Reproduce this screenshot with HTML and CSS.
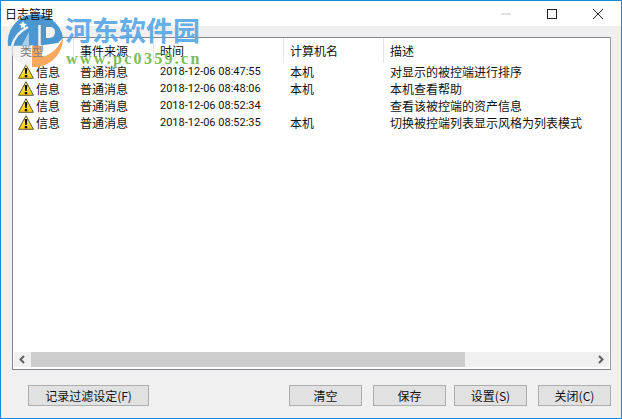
FILE: index.html
```html
<!DOCTYPE html>
<html lang="zh-CN">

<head>
   <meta charset="UTF-8">
   <title>日志管理</title>
   <link rel="stylesheet" href="styles.css">
</head>

<body>
   <div class="window">
      <!-- 标题栏 -->
      <div class="titlebar">
         <span class="title">日志管理</span>
         <div class="controls">
            <svg class="ctl" width="46" height="26" viewBox="0 0 46 26"><path d="M18 13h10" stroke="#c4c4c4" fill="none"/></svg>
            <svg class="ctl" width="46" height="26" viewBox="0 0 46 26"><rect x="18.500" y="8.500" width="9" height="9" stroke="#222" fill="none"/></svg>
            <svg class="ctl" width="46" height="26" viewBox="0 0 46 26"><path d="M18 8l10 10M28 8l-10 10" stroke="#222" fill="none"/></svg>
         </div>
      </div>

      <div class="content">
         <!-- 日志列表 -->
         <div class="listbox">
            <div class="list-area">
               <div class="row head">
                  <div class="cell c1"><span class="type-label">类型</span></div>
                  <div class="cell c2">事件来源</div>
                  <div class="cell c3">时间</div>
                  <div class="cell c4">计算机名</div>
                  <div class="cell c5">描述</div>
               </div>
               <div class="row">
                  <div class="cell c1"><svg class="warn" width="16" height="15" viewBox="0 0 16 15"><use href="#warn-icon"/></svg>信息</div>
                  <div class="cell c2">普通消息</div>
                  <div class="cell c3 time">2018-12-06 08:47:55</div>
                  <div class="cell c4">本机</div>
                  <div class="cell c5">对显示的被控端进行排序</div>
               </div>
               <div class="row">
                  <div class="cell c1"><svg class="warn" width="16" height="15" viewBox="0 0 16 15"><use href="#warn-icon"/></svg>信息</div>
                  <div class="cell c2">普通消息</div>
                  <div class="cell c3 time">2018-12-06 08:48:06</div>
                  <div class="cell c4">本机</div>
                  <div class="cell c5">本机查看帮助</div>
               </div>
               <div class="row">
                  <div class="cell c1"><svg class="warn" width="16" height="15" viewBox="0 0 16 15"><use href="#warn-icon"/></svg>信息</div>
                  <div class="cell c2">普通消息</div>
                  <div class="cell c3 time">2018-12-06 08:52:34</div>
                  <div class="cell c4"></div>
                  <div class="cell c5">查看该被控端的资产信息</div>
               </div>
               <div class="row">
                  <div class="cell c1"><svg class="warn" width="16" height="15" viewBox="0 0 16 15"><use href="#warn-icon"/></svg>信息</div>
                  <div class="cell c2">普通消息</div>
                  <div class="cell c3 time">2018-12-06 08:52:35</div>
                  <div class="cell c4">本机</div>
                  <div class="cell c5">切换被控端列表显示风格为列表模式</div>
               </div>
            </div>
            <!-- 横向滚动条 -->
            <div class="scrollbar">
               <svg class="arrow" width="17" height="15" viewBox="0 0 17 15"><path d="M10 4L6.500 7.500L10 11" stroke="#606060" stroke-width="2" fill="none"/></svg>
               <div class="track"><div class="thumb"></div></div>
               <svg class="arrow" width="17" height="15" viewBox="0 0 17 15"><path d="M7 4L10.500 7.500L7 11" stroke="#606060" stroke-width="2" fill="none"/></svg>
            </div>
         </div>

         <!-- 按钮 -->
         <div class="buttons">
            <button class="btn btn-filter">记录过滤设定(F)</button>
            <button class="btn btn-clear">清空</button>
            <button class="btn btn-save">保存</button>
            <button class="btn btn-set">设置(S)</button>
            <button class="btn btn-close">关闭(C)</button>
         </div>
      </div>
   </div>

   <!-- 水印 -->
   <div class="watermark">
      <svg class="wm-logo" width="70" height="70" viewBox="0 0 70 70">
         <!-- 左下半透明 -->
         <path d="M8 46A27.500 27.500 0 0 0 31 67L31 45Z" fill="#ececec" opacity=".7"/>
         <!-- 蓝色上半 -->
         <path d="M8 46A27.500 27.500 0 1 1 63 38L58 43L44 45L8 46Z" fill="#4a97d2"/>
         <!-- 白色弧线和缺口 -->
         <path d="M12 46C14 38 20 31 28 27" stroke="#f2f2f2" stroke-width="2.500" fill="none"/>
         <path d="M29 32L22 45L29 45Z" fill="#f2f2f2" opacity=".6"/>
         <path d="M39.500 25V46" stroke="#f2f2f2" stroke-width="2.500" fill="none"/>
         <path d="M46 27H50C53 27 55 29 55 32C55 35 53 38 49 38H46Z" fill="#f2f2f2"/>
         <path d="M23 21l1.200 2.600l2.800 .3l-2.100 1.900l.6 2.800l-2.500-1.400l-2.500 1.400l.6-2.800l-2.100-1.900l2.800-.3z" fill="#fff"/>
         <!-- 橙色月牙 -->
         <path d="M32 46L42 46L42 57C51 55 58 48 63 38C63 54 50 68 32 67Z" fill="#f7a85c"/>
      </svg>
      <span class="wm-name">河东软件园</span>
      <span class="wm-url">www.pc0359.cn</span>
   </div>

   <svg class="defs" width="0" height="0">
      <defs>
         <linearGradient id="warn-fill" x1="0" y1="0" x2="0" y2="1">
            <stop offset="0" stop-color="#fff27a"/>
            <stop offset="1" stop-color="#fbcb00"/>
         </linearGradient>
         <symbol id="warn-icon" viewBox="0 0 16 15">
            <path d="M8 .7L15.400 14.300H.6Z" fill="url(#warn-fill)" stroke="#5c5a40" stroke-linejoin="round"/>
            <path d="M6.700 4h2.600L8.700 10H7.300ZM6.800 11h2.400v2.200H6.800Z" fill="#000"/>
         </symbol>
      </defs>
   </svg>
</body>

</html>
```

FILE: styles.css
```css
/* Sayfa */
html,
body {
   margin: 0;
   padding: 0;
}

body {
   width: 622px;
   height: 419px;
   overflow: hidden;
   font-family: "Noto Sans CJK SC", "Liberation Sans", sans-serif;
   font-size: 12px;
   color: #111;
}

.window {
   box-sizing: border-box;
   width: 622px;
   height: 419px;
   display: flex;
   flex-direction: column;
   border: 1px solid #1a86d8;
   background-color: #f0f0f0;
}

/* title bar */
.titlebar {
   height: 25px;
   flex: none;
   display: flex;
   justify-content: space-between;
   background-color: #ffffff;
}

.title {
   position: relative;
   z-index: 2;
   padding-left: 4px;
   line-height: 25px;
   font-size: 12px;
}

.controls {
   display: flex;
}

.ctl {
   display: block;
}

.content {
   flex: 1;
   display: flex;
   flex-direction: column;
   padding: 11px 10px 0 11px;
}

/* list */
.listbox {
   box-sizing: border-box;
   height: 333px;
   display: flex;
   flex-direction: column;
   border: 1px solid #828790;
   border-right-color: #9a9a9f;
   background-color: #ffffff;
}

.list-area {
   flex: 1;
}

.row {
   display: flex;
   height: 17px;
   line-height: 17px;
   white-space: nowrap;
}

.head {
   height: 25px;
   line-height: 25px;
}

.head .cell {
   border-right: 1px solid #e5e5e5;
   height: 25px;
}

.head .c5 {
   border-right: none;
}

.cell {
   box-sizing: border-box;
   padding-left: 6px;
}

.c1 {
   width: 61px;
   display: flex;
   align-items: center;
   padding-left: 5px;
}

.head .c1 {
   padding-left: 7px;
}

.type-label {
   position: relative;
   z-index: 2;
   color: #808080;
}

.c2 {
   width: 80px;
}

.c3 {
   width: 130px;
}

.c4 {
   width: 100px;
}

.c5 {
   flex: 1;
}

.time {
   font-family: Roboto, "Liberation Sans", sans-serif;
   font-size: 11px;
}

.warn {
   flex: none;
   margin-right: 2px;
}

/* scrollbar */
.scrollbar {
   height: 15px;
   margin: 0 1px 2px 1px;
   display: flex;
   background-color: #f0f0f0;
}

.arrow {
   flex: none;
}

.track {
   flex: 1;
}

.thumb {
   width: 434px;
   height: 100%;
   background-color: #cdcdcd;
}

/* buttons */
.buttons {
   display: flex;
   margin-top: 15px;
   padding-left: 16px;
}

.btn {
   box-sizing: border-box;
   height: 21px;
   padding: 0;
   border: 1px solid #adadad;
   background-color: #e1e1e1;
   font-family: inherit;
   font-size: 12px;
   color: #111;
}

.btn-filter {
   width: 121px;
   margin-right: 140px;
}

.btn-clear {
   width: 73px;
   margin-right: 11px;
}

.btn-save {
   width: 73px;
   margin-right: 8px;
}

.btn-set {
   width: 73px;
   margin-right: 11px;
}

.btn-close {
   width: 73px;
}

/* watermark over the window */
.watermark {
   position: absolute;
   z-index: 1;
   left: 0;
   top: 0;
   width: 210px;
   height: 70px;
}

.wm-logo {
   position: absolute;
   left: 0;
   top: 0;
}

.wm-name {
   position: absolute;
   left: 65px;
   top: 12px;
   font-family: "Noto Sans CJK SC", sans-serif;
   font-size: 27px;
   line-height: 36px;
   font-weight: 700;
   color: #55a6e6;
   opacity: .9;
   white-space: nowrap;
}

.wm-url {
   position: absolute;
   left: 66px;
   top: 50px;
   font-family: "Liberation Serif", serif;
   font-size: 16px;
   line-height: 18px;
   font-weight: 700;
   letter-spacing: 2.300px;
   color: #6fb54a;
   opacity: .9;
   white-space: nowrap;
}

.defs {
   position: absolute;
}
```
